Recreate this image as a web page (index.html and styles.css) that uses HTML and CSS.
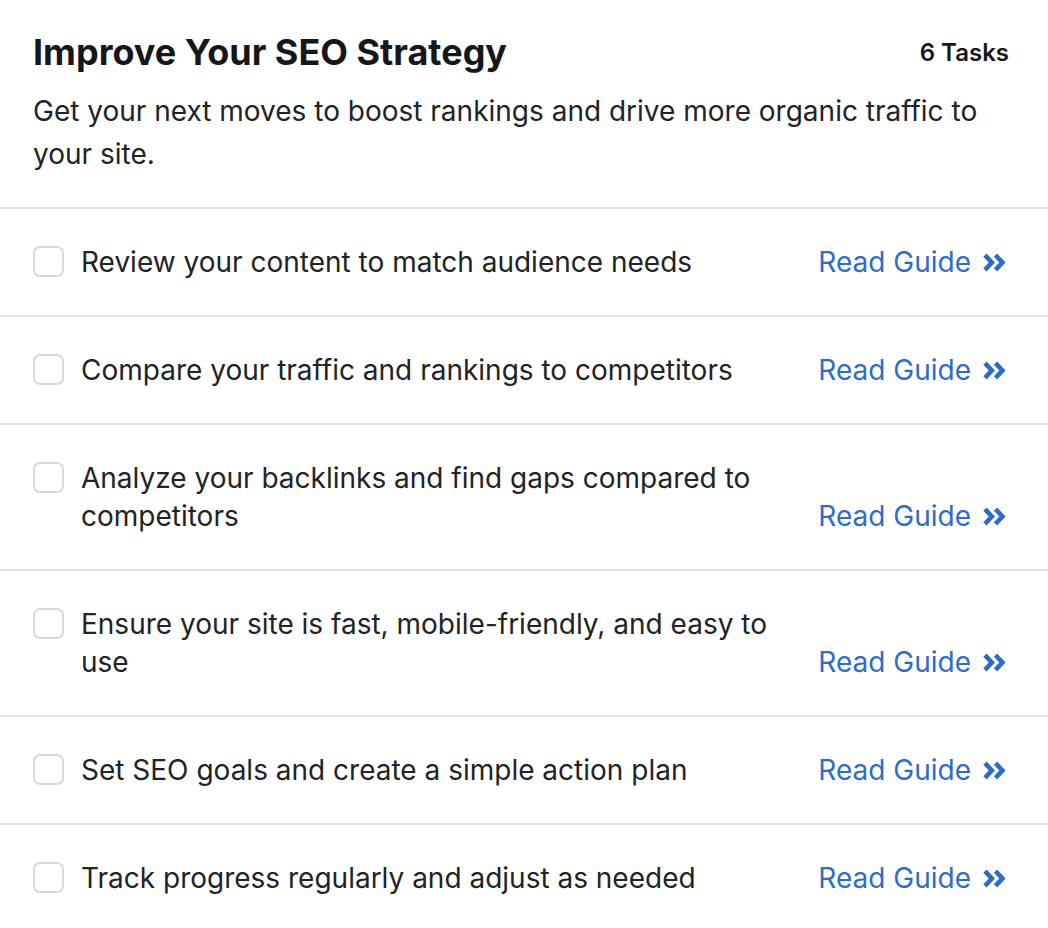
FILE: index.html
```html
<!DOCTYPE html>
<html lang="en">
<head>
<meta charset="utf-8">
<title>Improve Your SEO Strategy</title>
<link rel="stylesheet" href="styles.css">
</head>
<body>
<section class="card">
  <header class="card-header">
    <div class="title-row">
      <h1 class="title">Improve Your SEO Strategy</h1>
      <span class="count">6 Tasks</span>
    </div>
    <p class="desc">Get your next moves to boost rankings and drive more organic traffic to your site.</p>
  </header>
  <ul class="tasks">
    <li class="task">
      <span class="checkbox"></span>
      <span class="task-text">Review your content to match audience needs</span>
      <a class="guide" href="#">Read Guide <svg class="chev" viewBox="0 0 24 18" aria-hidden="true"><path d="M2.5 2 L9 9 L2.5 16 M12.5 2 L19 9 L12.5 16"/></svg></a>
    </li>
    <li class="task">
      <span class="checkbox"></span>
      <span class="task-text">Compare your traffic and rankings to competitors</span>
      <a class="guide" href="#">Read Guide <svg class="chev" viewBox="0 0 24 18" aria-hidden="true"><path d="M2.5 2 L9 9 L2.5 16 M12.5 2 L19 9 L12.5 16"/></svg></a>
    </li>
    <li class="task">
      <span class="checkbox"></span>
      <span class="task-text">Analyze your backlinks and find gaps compared to competitors</span>
      <a class="guide" href="#">Read Guide <svg class="chev" viewBox="0 0 24 18" aria-hidden="true"><path d="M2.5 2 L9 9 L2.5 16 M12.5 2 L19 9 L12.5 16"/></svg></a>
    </li>
    <li class="task">
      <span class="checkbox"></span>
      <span class="task-text">Ensure your site is fast, mobile-friendly, and easy to use</span>
      <a class="guide" href="#">Read Guide <svg class="chev" viewBox="0 0 24 18" aria-hidden="true"><path d="M2.5 2 L9 9 L2.5 16 M12.5 2 L19 9 L12.5 16"/></svg></a>
    </li>
    <li class="task">
      <span class="checkbox"></span>
      <span class="task-text">Set SEO goals and create a simple action plan</span>
      <a class="guide" href="#">Read Guide <svg class="chev" viewBox="0 0 24 18" aria-hidden="true"><path d="M2.5 2 L9 9 L2.5 16 M12.5 2 L19 9 L12.5 16"/></svg></a>
    </li>
    <li class="task">
      <span class="checkbox"></span>
      <span class="task-text">Track progress regularly and adjust as needed</span>
      <a class="guide" href="#">Read Guide <svg class="chev" viewBox="0 0 24 18" aria-hidden="true"><path d="M2.5 2 L9 9 L2.5 16 M12.5 2 L19 9 L12.5 16"/></svg></a>
    </li>
  </ul>
</section>
</body>
</html>
```

FILE: styles.css
```css
* { box-sizing: border-box; }
html, body { margin: 0; padding: 0; background: #ffffff; }
body {
  font-family: Inter, "Noto Sans", "Liberation Sans", sans-serif;
  color: #1f2023;
  -webkit-font-smoothing: antialiased;
}
.card { width: 1048px; }
.card-header {
  padding: 30px 39px 31px 33px;
  border-bottom: 2px solid #e2e2e8;
}
.title-row {
  display: flex;
  align-items: center;
  justify-content: space-between;
}
.title {
  margin: 0;
  font-size: 36px;
  line-height: 44px;
  font-weight: 700;
  color: #16171a;
}
.count {
  font-size: 24px;
  font-weight: 600;
  color: #16171a;
}
.desc {
  margin: 16px 0 0;
  font-size: 28px;
  line-height: 43px;
  color: #222326;
}
.tasks { list-style: none; margin: 0; padding: 0; }
.task {
  display: flex;
  align-items: flex-start;
  padding: 34px 40px 34px 33px;
  border-bottom: 2px solid #e2e2e8;
  font-size: 28px;
  line-height: 38px;
}
.checkbox {
  flex: none;
  width: 31px;
  height: 31px;
  margin-top: 3px;
  margin-right: 17px;
  border: 2px solid #d9d9dc;
  border-radius: 7px;
  background: #fff;
}
.task-text {
  flex: 1;
  color: #222326;
}
.guide {
  flex: none;
  align-self: flex-end;
  margin-left: 24px;
  display: flex;
  align-items: center;
  gap: 11px;
  color: #2f6cc7;
  text-decoration: none;
}
.chev {
  width: 26px;
  height: 19px;
  fill: none;
  stroke: #2f6cc7;
  stroke-width: 4.4;
  stroke-linejoin: miter;
  stroke-linecap: butt;
}
```
